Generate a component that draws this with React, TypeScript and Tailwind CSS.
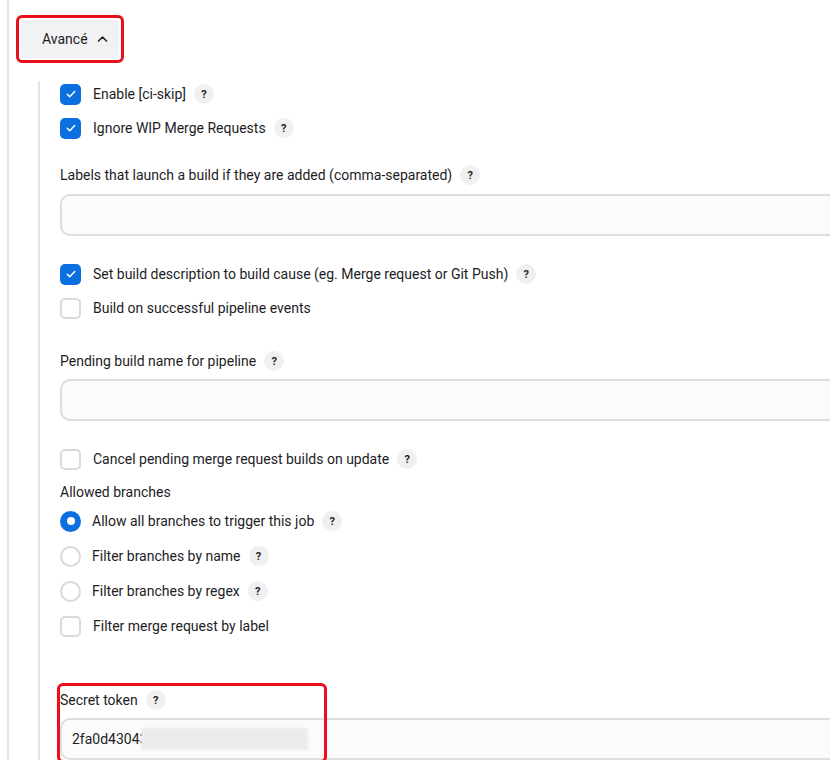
import React from "react";

const font = { fontFamily: 'Roboto, "Noto Sans", sans-serif' };

function Help() {
  return (
    <span className="ml-[8px] inline-flex h-[20px] w-[20px] shrink-0 items-center justify-center rounded-full bg-[#eef0f2] text-[11px] font-bold leading-none text-[#222]">
      ?
    </span>
  );
}

function CheckBox({ checked }: { checked?: boolean }) {
  if (checked) {
    return (
      <span className="flex h-[21px] w-[21px] shrink-0 items-center justify-center rounded-[5px] bg-[#0b6fe0]">
        <svg width="12" height="12" viewBox="0 0 12 12" fill="none">
          <path d="M2.3 6.3l2.4 2.4 5-5.2" stroke="white" strokeWidth="1.5" strokeLinecap="round" strokeLinejoin="round" />
        </svg>
      </span>
    );
  }
  return <span className="h-[21px] w-[21px] shrink-0 rounded-[5px] border-2 border-[#dadada] bg-white" />;
}

function Radio({ checked }: { checked?: boolean }) {
  if (checked) {
    return (
      <span className="flex h-[21px] w-[21px] shrink-0 items-center justify-center rounded-full bg-[#0b6fe0]">
        <span className="h-[8px] w-[8px] rounded-full bg-white" />
      </span>
    );
  }
  return <span className="h-[21px] w-[21px] shrink-0 rounded-full border-2 border-[#dadada] bg-white" />;
}

function CheckRow({ label, checked, help }: { label: string; checked?: boolean; help?: boolean }) {
  return (
    <div className="flex h-[22px] items-center">
      <CheckBox checked={checked} />
      <span className="ml-[12px] whitespace-nowrap">{label}</span>
      {help && <Help />}
    </div>
  );
}

function RadioRow({ label, checked, help }: { label: string; checked?: boolean; help?: boolean }) {
  return (
    <div className="flex h-[22px] items-center">
      <Radio checked={checked} />
      <span className="ml-[11px] whitespace-nowrap">{label}</span>
      {help && <Help />}
    </div>
  );
}

function Field({ label }: { label: string }) {
  return (
    <div className="flex h-[20px] items-center whitespace-nowrap">
      {label}
      <Help />
    </div>
  );
}

function TextInput() {
  return <div className="mr-[-20px] h-[42px] rounded-[10px] border-2 border-[#dedede] bg-[#fbfbfc]" />;
}

export default function App() {
  return (
    <div className="h-[760px] w-[830px] overflow-hidden bg-white pl-[7px] text-[14px] text-[#1d1d1f]" style={font}>
      <div className="h-full border-l-2 border-[#e4e4e6] pt-[15px]">
        <div className="ml-[7px] w-[108px] rounded-[6px] border-[3px] border-[#e8101a] p-[2px]">
          <div className="flex h-[38px] items-center gap-[9px] rounded-[4px] bg-[#f2f2f4] pl-[21px]">
            <span>Avancé</span>
            <svg width="11" height="8" viewBox="0 0 11 8" fill="none">
              <path d="M1.5 6l4-4 4 4" stroke="#222" strokeWidth="1.6" strokeLinecap="round" strokeLinejoin="round" />
            </svg>
          </div>
        </div>

        <div className="relative ml-[29px] mt-[18px] h-[700px] border-l-2 border-[#e4e4e6] pl-[20px] pt-[2px]">
          <div className="flex flex-col gap-[12px]">
            <CheckRow label="Enable [ci-skip]" checked help />
            <CheckRow label="Ignore WIP Merge Requests" checked help />
          </div>

          <div className="mt-[26px]">
            <Field label="Labels that launch a build if they are added (comma-separated)" />
          </div>
          <div className="mt-[9px]">
            <TextInput />
          </div>

          <div className="mt-[27px] flex flex-col gap-[12px]">
            <CheckRow label="Set build description to build cause (eg. Merge request or Git Push)" checked help />
            <CheckRow label="Build on successful pipeline events" />
          </div>

          <div className="mt-[32px]">
            <Field label="Pending build name for pipeline" />
          </div>
          <div className="mt-[8px]">
            <TextInput />
          </div>

          <div className="mt-[27px]">
            <CheckRow label="Cancel pending merge request builds on update" help />
          </div>
          <div className="mt-[12px] flex h-[20px] items-center">Allowed branches</div>
          <div className="mt-[8px] flex flex-col gap-[13px]">
            <RadioRow label="Allow all branches to trigger this job" checked help />
            <RadioRow label="Filter branches by name" help />
            <RadioRow label="Filter branches by regex" help />
            <CheckRow label="Filter merge request by label" />
          </div>

          <div className="relative mt-[53px]">
            <Field label="Secret token" />
            <div className="mr-[-20px] mt-[8px] flex h-[42px] items-center overflow-hidden rounded-[10px] border-2 border-[#dedede] bg-[#fbfbfc] pl-[10px]">
              <span className="whitespace-nowrap">2fa0d43043</span>
              <span className="ml-[-6px] h-[22px] w-[167px] shrink-0 bg-[#ececee] blur-[1px]" />
            </div>
            <div className="absolute left-[-3px] top-[-7px] h-[80px] w-[270px] rounded-[6px] border-[3px] border-[#e8101a]" />
          </div>
        </div>
      </div>
    </div>
  );
}
